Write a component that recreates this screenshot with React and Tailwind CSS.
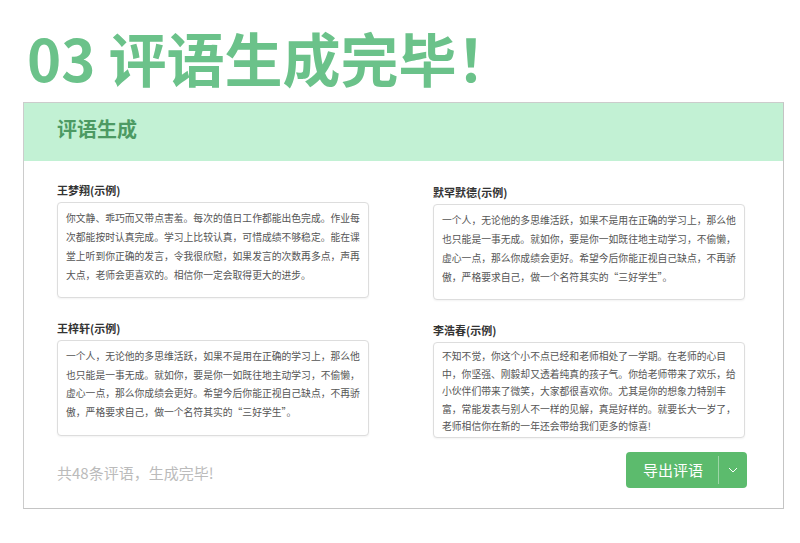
const FONT = { fontFamily: '"Noto Sans CJK SC", "Noto Sans", sans-serif' };

const comments = [
  {
    name: "王梦翔(示例)",
    text: "你文静、乖巧而又带点害羞。每次的值日工作都能出色完成。作业每次都能按时认真完成。学习上比较认真，可惜成绩不够稳定。能在课堂上听到你正确的发言，令我很欣慰，如果发言的次数再多点，声再大点，老师会更喜欢的。相信你一定会取得更大的进步。",
    box: "leading-[19px] pt-[6px]",
  },
  {
    name: "王梓轩(示例)",
    text: "一个人，无论他的多思维活跃，如果不是用在正确的学习上，那么他也只能是一事无成。就如你，要是你一如既往地主动学习，不偷懒，虚心一点，那么你成绩会更好。希望今后你能正视自己缺点，不再骄傲，严格要求自己，做一个名符其实的“三好学生”。",
    box: "leading-[18.5px] pt-[6px]",
  },
];

const commentsRight = [
  {
    name: "默罕默德(示例)",
    text: "一个人，无论他的多思维活跃，如果不是用在正确的学习上，那么他也只能是一事无成。就如你，要是你一如既往地主动学习，不偷懒，虚心一点，那么你成绩会更好。希望今后你能正视自己缺点，不再骄傲，严格要求自己，做一个名符其实的“三好学生”。",
    box: "leading-[19px] pt-[6px]",
  },
  {
    name: "李浩春(示例)",
    text: "不知不觉，你这个小不点已经和老师相处了一学期。在老师的心目中，你坚强、刚毅却又透着纯真的孩子气。你给老师带来了欢乐，给小伙伴们带来了微笑，大家都很喜欢你。尤其是你的想象力特别丰富，常能发表与别人不一样的见解，真是好样的。就要长大一岁了，老师相信你在新的一年还会带给我们更多的惊喜!",
    box: "leading-[17.5px] pt-[5px]",
  },
];

function Comment({ item, first }) {
  return (
    <div className={first ? "" : "mt-[22px]"}>
      <div className="text-[11px] font-bold leading-[16px] text-[#333333]">{item.name}</div>
      <div
        className={`mt-[4px] h-[96px] rounded-[4px] border border-[#dddddd] bg-white px-[8px] text-[9.8px] text-[#555555] shadow-[0_1px_2px_rgba(0,0,0,0.05)] ${item.box}`}
      >
        {item.text}
      </div>
    </div>
  );
}

export default function App() {
  return (
    <div className="h-[543px] w-[800px] overflow-hidden bg-white" style={FONT}>
      <h1 className="pl-[27px] pt-[28px] text-[58px] font-bold leading-[58px] text-[#6bc28a]">03 评语生成完毕！</h1>
      <div className="ml-[23px] mt-[16px] h-[407px] w-[761px] border border-[#cccccc] border-r-[#c4c4c4] border-b-[#c4c4c4]">
        <div className="flex h-[58px] items-center bg-[#c2f1d4] pb-[6px] pl-[33px] text-[20px] font-bold text-[#4c9a63]">
          评语生成
        </div>
        <div className="grid grid-cols-[312px_312px] gap-x-[64px] pl-[33px] pt-[21px]">
          <div>
            {comments.map((c, i) => (
              <Comment key={c.name} item={c} first={i === 0} />
            ))}
          </div>
          <div className="mt-[2px]">
            {commentsRight.map((c, i) => (
              <Comment key={c.name} item={c} first={i === 0} />
            ))}
          </div>
        </div>
        <div className="flex w-[723px] items-center justify-between pl-[33px] pt-[14px]">
          <span className="mt-[6px] text-[15px] text-[#bbbbbb]">共48条评语，生成完毕!</span>
          <button className="flex h-[36px] w-[121px] items-center rounded-[4px] bg-[#5cbb6d] text-white">
            <span className="flex-1 pl-[2px] text-[15px]">导出评语</span>
            <span className="h-[28px] w-px bg-white/40" />
            <span className="flex w-[28px] items-center justify-center">
              <svg width="10" height="6" viewBox="0 0 10 6" fill="none">
                <polyline points="1,1 5,5 9,1" stroke="white" strokeWidth="1" />
              </svg>
            </span>
          </button>
        </div>
      </div>
    </div>
  );
}
